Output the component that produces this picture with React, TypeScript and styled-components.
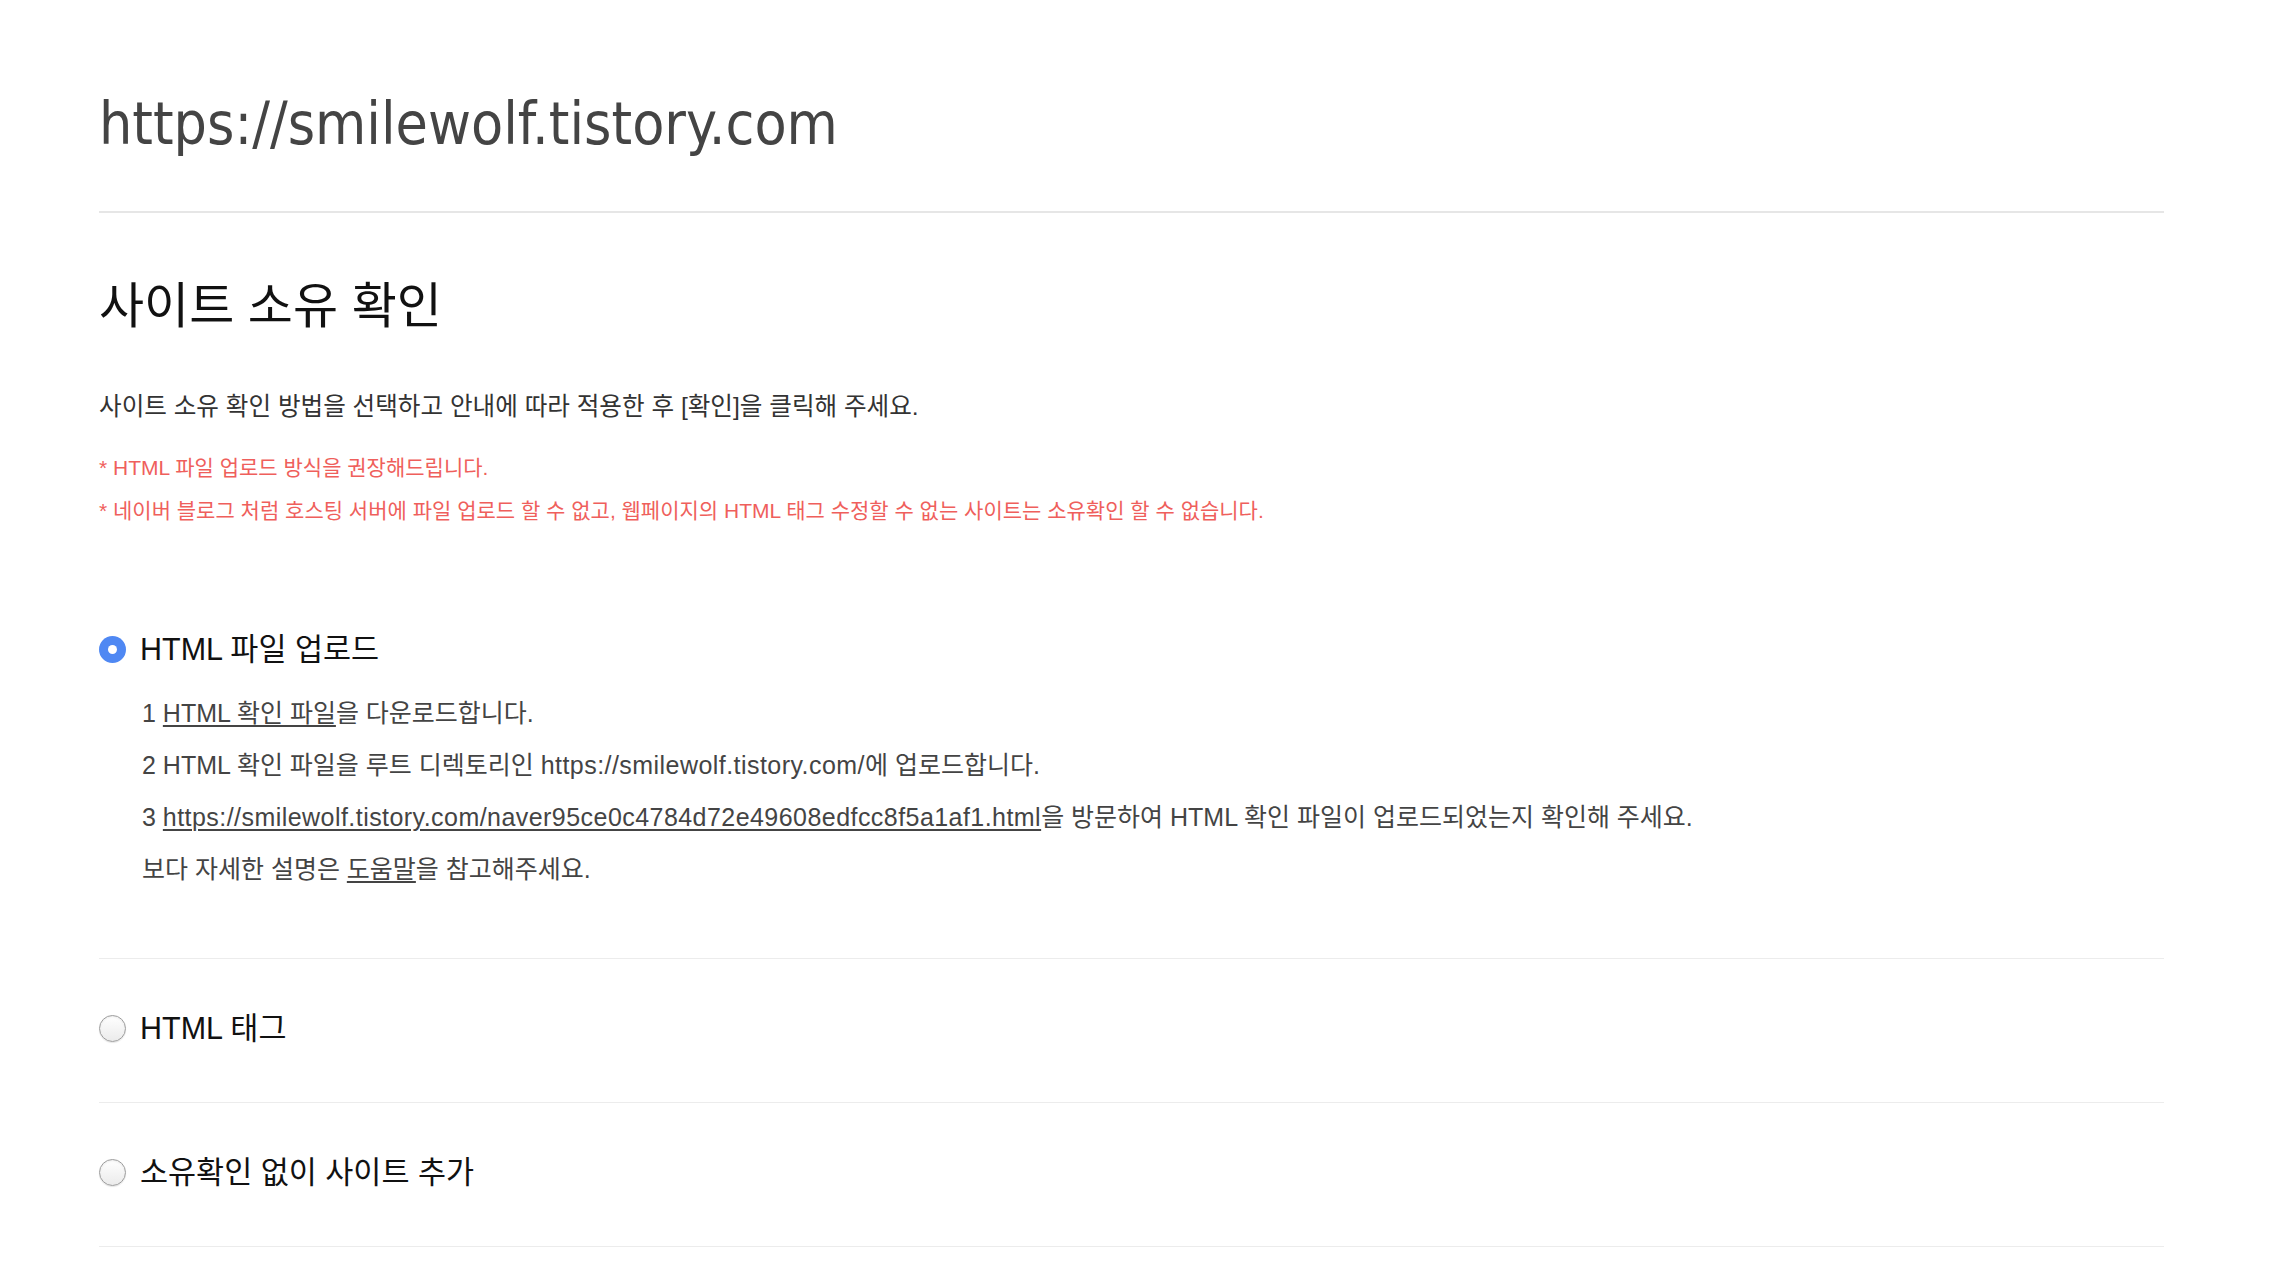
import React from "react";
import styled, { createGlobalStyle } from "styled-components";

const GlobalStyle = createGlobalStyle`
  html, body {
    margin: 0;
    padding: 0;
    background: #fff;
  }
  body {
    font-family: "Liberation Sans", "Noto Sans CJK KR", sans-serif;
    color: #333;
  }
`;

const Page = styled.div`
  padding: 0 116px 40px 99px;
`;

const Header = styled.header`
  padding: 84px 0 47px;
  border-bottom: 2px solid #e6e6e6;
`;

const SiteUrl = styled.h1`
  margin: 0;
  font-family: "DejaVu Sans Condensed", "DejaVu Sans", sans-serif;
  font-stretch: condensed;
  font-weight: 400;
  font-size: 58.5px;
  line-height: 80px;
  color: #444;
`;

const Intro = styled.section`
  padding-top: 63px;
`;

const Heading = styled.h2`
  margin: 0;
  font-size: 49px;
  font-weight: 400;
  line-height: 60px;
  color: #111;
`;

const Desc = styled.p`
  margin: 53px 0 0;
  font-size: 24.6px;
  line-height: 36px;
  color: #333;
`;

const Notes = styled.ul`
  list-style: none;
  margin: 21px 0 0;
  padding: 0;
`;

const Note = styled.li`
  font-size: 21px;
  line-height: 43px;
  color: #ef5f5c;
`;

const Methods = styled.ul`
  list-style: none;
  margin: 48px 0 0;
  padding: 0;
`;

const Method = styled.li`
  padding: 49px 0 54px;
  border-bottom: 1px solid #ececec;
`;

const RadioRow = styled.label`
  display: flex;
  align-items: center;
  gap: 14px;
  height: 40px;
  cursor: pointer;
`;

const Radio = styled.span<{ $checked?: boolean }>`
  position: relative;
  flex: none;
  width: 27px;
  height: 27px;
  box-sizing: border-box;
  border-radius: 50%;
  background: ${(p) =>
    p.$checked ? "#4f88f3" : "linear-gradient(#ffffff, #ebebeb)"};
  border: ${(p) => (p.$checked ? "none" : "1.5px solid #9c9c9c")};
  box-shadow: ${(p) =>
    p.$checked
      ? "none"
      : "inset 0 1px 2px rgba(0, 0, 0, 0.08), 0 1px 1px rgba(0, 0, 0, 0.1)"};

  &::after {
    content: "";
    display: ${(p) => (p.$checked ? "block" : "none")};
    position: absolute;
    left: 50%;
    top: 50%;
    width: 9px;
    height: 9px;
    margin: -4.5px 0 0 -4.5px;
    border-radius: 50%;
    background: #fff;
  }
`;

const Label = styled.span`
  font-size: 30.5px;
  line-height: 40px;
  color: #111;
`;

const Steps = styled.ol`
  list-style: none;
  margin: 18px 0 9px;
  padding: 0 0 0 43px;
`;

const Step = styled.li`
  font-size: 25px;
  line-height: 52px;
  color: #444;
  white-space: nowrap;
`;

const Link = styled.a`
  color: inherit;
  text-decoration: underline;
  text-underline-offset: 3px;
  text-decoration-thickness: 1.5px;
`;

const Url = styled.span`
  letter-spacing: 0.45px;
`;

const HTML_FILE =
  "https://smilewolf.tistory.com/naver95ce0c4784d72e49608edfcc8f5a1af1.html";

export default function App() {
  return (
    <>
      <GlobalStyle />
      <Page>
        <Header>
          <SiteUrl>https://smilewolf.tistory.com</SiteUrl>
        </Header>

        <Intro>
          <Heading>사이트 소유 확인</Heading>
          <Desc>
            사이트 소유 확인 방법을 선택하고 안내에 따라 적용한 후 [확인]을
            클릭해 주세요.
          </Desc>
          <Notes>
            <Note>* HTML 파일 업로드 방식을 권장해드립니다.</Note>
            <Note>
              * 네이버 블로그 처럼 호스팅 서버에 파일 업로드 할 수 없고,
              웹페이지의 HTML 태그 수정할 수 없는 사이트는 소유확인 할 수
              없습니다.
            </Note>
          </Notes>
        </Intro>

        <Methods>
          <Method>
            <RadioRow>
              <Radio $checked />
              <Label>HTML 파일 업로드</Label>
            </RadioRow>
            <Steps>
              <Step>
                1 <Link href="#">HTML 확인 파일</Link>을 다운로드합니다.
              </Step>
              <Step>
                2 HTML 확인 파일을 루트 디렉토리인{" "}
                <Url>https://smilewolf.tistory.com/</Url>에 업로드합니다.
              </Step>
              <Step>
                3{" "}
                <Link href="#">
                  <Url>{HTML_FILE}</Url>
                </Link>
                을 방문하여 HTML 확인 파일이 업로드되었는지 확인해 주세요.
              </Step>
              <Step>
                보다 자세한 설명은 <Link href="#">도움말</Link>을 참고해주세요.
              </Step>
            </Steps>
          </Method>
          <Method>
            <RadioRow>
              <Radio />
              <Label>HTML 태그</Label>
            </RadioRow>
          </Method>
          <Method>
            <RadioRow>
              <Radio />
              <Label>소유확인 없이 사이트 추가</Label>
            </RadioRow>
          </Method>
        </Methods>
      </Page>
    </>
  );
}
